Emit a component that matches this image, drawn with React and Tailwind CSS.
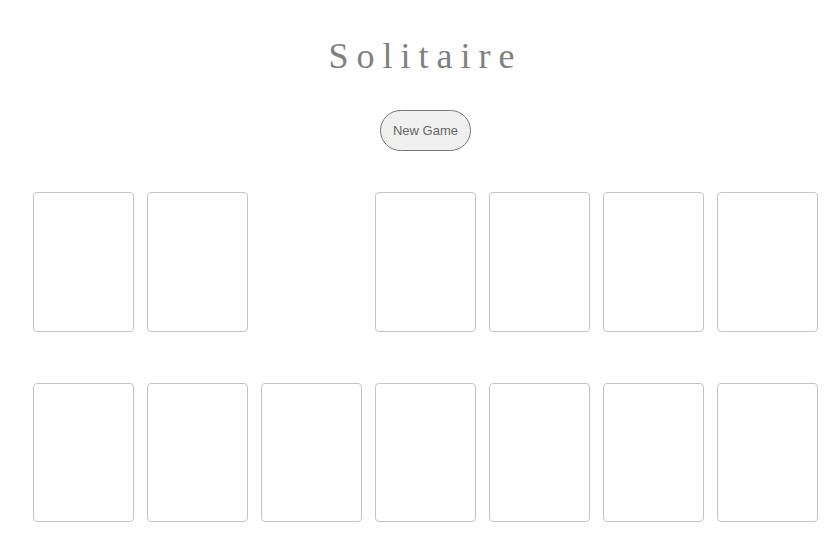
import React from "react";

const Slot = ({ hidden, short }) => (
  <div
    className={`w-[101px] ${short ? "h-[139px]" : "h-[140px]"} rounded-[4px] border ${
      hidden ? "border-transparent" : "border-[#c4c4c4]"
    } bg-white`}
  />
);

const App = () => {
  const top = [false, false, true, false, false, false, false];
  const bottom = [0, 1, 2, 3, 4, 5, 6];

  return (
    <div className="min-h-[543px] bg-white pl-[33px] pr-[8px] font-['Liberation_Sans',sans-serif]">
      <h1 className="pt-[36px] text-center font-['Liberation_Serif',serif] text-[36px] leading-[40px] tracking-[8px] text-[#808080]">
        Solitaire
      </h1>

      <div className="mt-[34px] flex justify-center">
        <button className="h-[41px] w-[91px] rounded-full border border-[#777] bg-[#f0f0f0] text-[13px] text-[#666]">
          New Game
        </button>
      </div>

      <div className="mt-[41px] flex gap-[13px]">
        {top.map((h, i) => (
          <Slot key={i} hidden={h} />
        ))}
      </div>

      <div className="mt-[51px] flex gap-[13px]">
        {bottom.map((i) => (
          <Slot key={i} short />
        ))}
      </div>
    </div>
  );
};

export default App;
